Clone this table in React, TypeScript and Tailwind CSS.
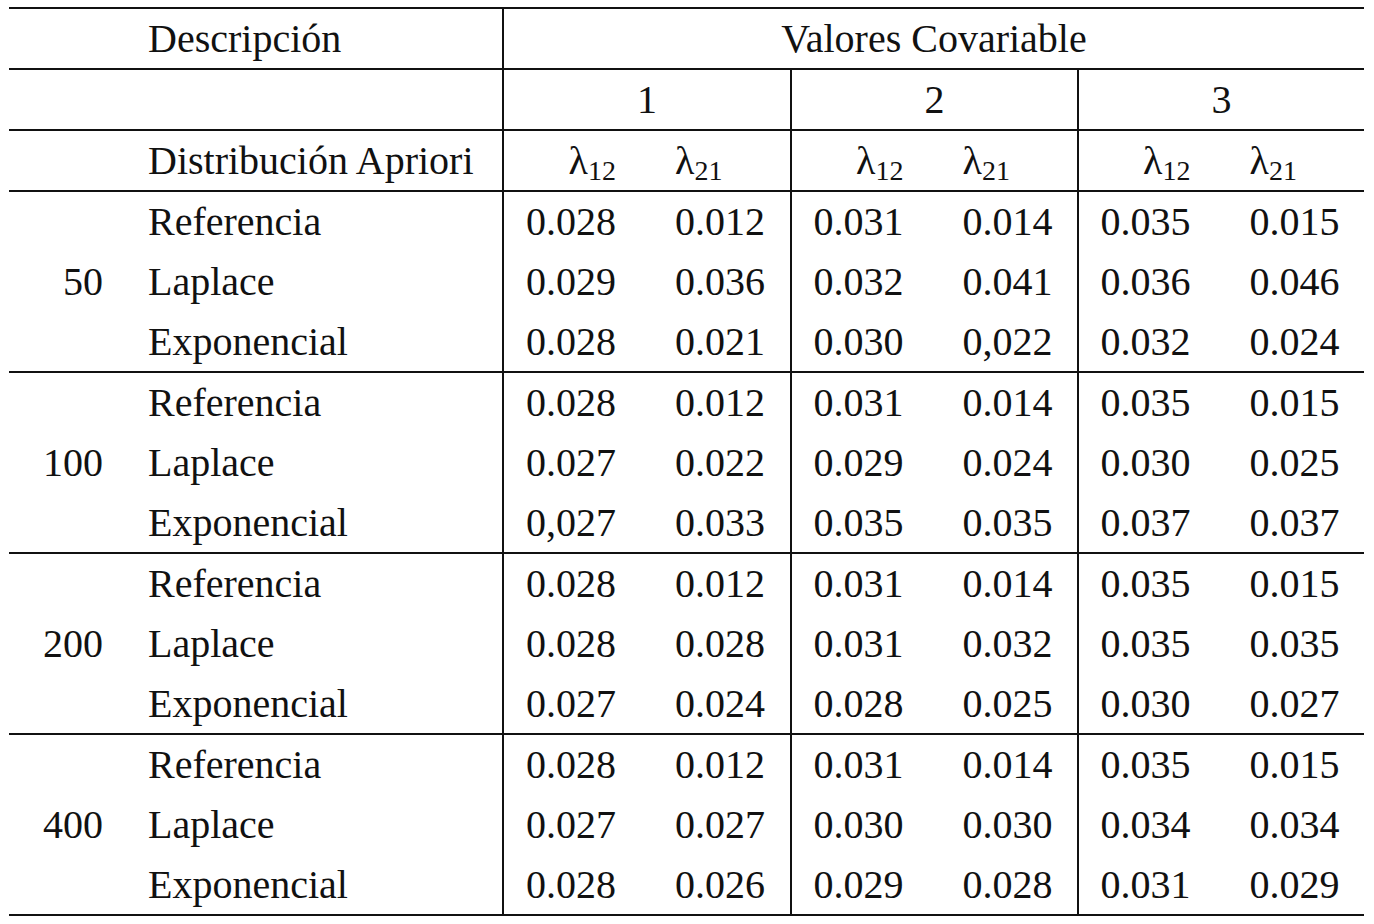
import React from 'react';

type Group = { n: string; rows: { name: string; v: string[] }[] };

const groups: Group[] = [
  {
    n: '50',
    rows: [
      { name: 'Referencia', v: ['0.028', '0.012', '0.031', '0.014', '0.035', '0.015'] },
      { name: 'Laplace', v: ['0.029', '0.036', '0.032', '0.041', '0.036', '0.046'] },
      { name: 'Exponencial', v: ['0.028', '0.021', '0.030', '0,022', '0.032', '0.024'] },
    ],
  },
  {
    n: '100',
    rows: [
      { name: 'Referencia', v: ['0.028', '0.012', '0.031', '0.014', '0.035', '0.015'] },
      { name: 'Laplace', v: ['0.027', '0.022', '0.029', '0.024', '0.030', '0.025'] },
      { name: 'Exponencial', v: ['0,027', '0.033', '0.035', '0.035', '0.037', '0.037'] },
    ],
  },
  {
    n: '200',
    rows: [
      { name: 'Referencia', v: ['0.028', '0.012', '0.031', '0.014', '0.035', '0.015'] },
      { name: 'Laplace', v: ['0.028', '0.028', '0.031', '0.032', '0.035', '0.035'] },
      { name: 'Exponencial', v: ['0.027', '0.024', '0.028', '0.025', '0.030', '0.027'] },
    ],
  },
  {
    n: '400',
    rows: [
      { name: 'Referencia', v: ['0.028', '0.012', '0.031', '0.014', '0.035', '0.015'] },
      { name: 'Laplace', v: ['0.027', '0.027', '0.030', '0.030', '0.034', '0.034'] },
      { name: 'Exponencial', v: ['0.028', '0.026', '0.029', '0.028', '0.031', '0.029'] },
    ],
  },
];

const cols = 'grid grid-cols-[495px_288px_287px_285px]';
const line = 'border-[#111]';

function Lambda({ sub }: { sub: string }) {
  return (
    <span>
      λ<sub className="relative -bottom-[6px] text-[28px]">{sub}</sub>
    </span>
  );
}

function Pair({ a, b }: { a: React.ReactNode; b: React.ReactNode }) {
  return (
    <div className="grid grid-cols-2 h-full items-center">
      <div className="flex justify-end pr-[31px]">{a}</div>
      <div className="flex justify-start pl-[28px]">{b}</div>
    </div>
  );
}

export default function App() {
  return (
    <div className="min-h-screen bg-white text-[#111] text-[40px] leading-none font-['Liberation_Serif','Times_New_Roman',serif]">
      <div className="ml-[9px] pt-[7px] w-[1355px]">
        <div className={`border-t-2 ${line}`}>
          {/* header 1 */}
          <div className={`${cols} h-[61px] border-b-2 ${line}`}>
            <div className={`border-r-2 ${line} flex items-center pl-[139px]`}>Descripción</div>
            <div className="col-span-3 flex items-center justify-center">Valores Covariable</div>
          </div>
          {/* header 2 */}
          <div className={`${cols} h-[61px] border-b-2 ${line}`}>
            <div className={`border-r-2 ${line}`} />
            <div className={`border-r-2 ${line} flex items-center justify-center`}>1</div>
            <div className={`border-r-2 ${line} flex items-center justify-center`}>2</div>
            <div className="flex items-center justify-center">3</div>
          </div>
          {/* header 3 */}
          <div className={`${cols} h-[61px] border-b-2 ${line}`}>
            <div className={`border-r-2 ${line} flex items-center pl-[139px]`}>Distribución Apriori</div>
            {[0, 1, 2].map((i) => (
              <div key={i} className={i < 2 ? `border-r-2 ${line}` : ''}>
                <Pair a={<Lambda sub="12" />} b={<Lambda sub="21" />} />
              </div>
            ))}
          </div>
          {groups.map((g) => (
            <div key={g.n} className={`${cols} h-[181px] border-b-2 ${line}`}>
              <div className={`border-r-2 ${line} flex`}>
                <div className="w-[94px] flex items-center justify-end">{g.n}</div>
                <div className="flex flex-col pl-[45px]">
                  {g.rows.map((r) => (
                    <div key={r.name} className="h-[60px] flex items-center">
                      {r.name}
                    </div>
                  ))}
                </div>
              </div>
              {[0, 1, 2].map((c) => (
                <div key={c} className={`flex flex-col ${c < 2 ? `border-r-2 ${line}` : ''}`}>
                  {g.rows.map((r) => (
                    <div key={r.name} className="h-[60px]">
                      <Pair a={r.v[c * 2]} b={r.v[c * 2 + 1]} />
                    </div>
                  ))}
                </div>
              ))}
            </div>
          ))}
        </div>
      </div>
    </div>
  );
}
